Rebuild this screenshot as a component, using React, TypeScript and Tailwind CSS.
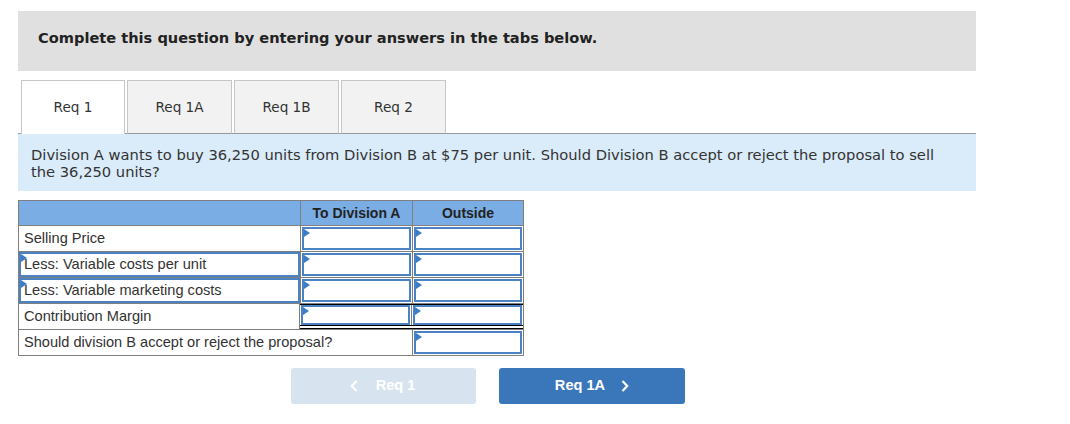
import React from 'react';

const tahoma = 'font-["DejaVu_Sans",Tahoma,sans-serif]';
const arial = 'font-["Liberation_Sans",Arial,sans-serif]';

const Marker = () => (
  <span className="absolute left-0 top-0 w-0 h-0 border-t-[4px] border-b-[4px] border-l-[6px] border-t-transparent border-b-transparent border-l-[#3d7cc9]" />
);

const InputBox: React.FC = () => (
  <div className="relative h-full w-full border-2 border-[#4a82c4] bg-white">
    <Marker />
  </div>
);

const tabs = ['Req 1', 'Req 1A', 'Req 1B', 'Req 2'];

const rows = [
  { label: 'Selling Price', select: false },
  { label: 'Less: Variable costs per unit', select: true },
  { label: 'Less: Variable marketing costs', select: true },
];

const App: React.FC = () => {
  return (
    <div className="w-[1070px] h-[424px] bg-white overflow-hidden">
      <div className="pl-[18px] pt-[11px]">
        <div className="w-[958px] h-[60px] bg-[#e0e0e0] pl-[20px] pt-[16px]">
          <p className={`${tahoma} text-[14.6px] font-bold text-[#222]`}>
            Complete this question by entering your answers in the tabs below.
          </p>
        </div>

        <div className="flex gap-[2px] pl-[3px] mt-[9px] relative z-10 -mb-px">
          {tabs.map((t, i) => (
            <div
              key={t}
              className={`${tahoma} h-[54px] flex items-center justify-center text-[13.6px] text-[#333] border border-[#c6c6c6] ${
                i === 0 ? 'w-[104px] bg-white border-b-0' : 'w-[105px] bg-[#f2f2f2] border-b-[#999]'
              }`}
            >
              {t}
            </div>
          ))}
        </div>

        <div className="w-[958px] h-[58px] bg-[#daebf9] border-t border-[#999] pl-[13px] pt-[12px]">
          <p className={`${tahoma} text-[14.7px] leading-[17px] text-[#333] whitespace-nowrap`}>
            Division A wants to buy 36,250 units from Division B at $75 per unit. Should Division B accept or reject the proposal to sell
            <br />
            the 36,250 units?
          </p>
        </div>

        <div className={`${arial} mt-[9px] w-[506px] border border-[#7f7f7f] text-[14.6px] text-[#333]`}>
          <div className="flex h-[25px] bg-[#7aade3] border-b border-[#7f7f7f]">
            <div className="w-[282px] border-r border-[#7f7f7f]" />
            <div className="w-[112px] border-r border-[#7f7f7f] flex items-center justify-center font-bold text-[14px] text-[#222]">
              To Division A
            </div>
            <div className="flex-1 flex items-center justify-center font-bold text-[14px] text-[#222]">Outside</div>
          </div>

          {rows.map((r) => (
            <div key={r.label} className="flex h-[26px] border-b border-[#7f7f7f]">
              <div className="w-[282px] border-r border-[#7f7f7f]">
                {r.select ? (
                  <div className="relative h-full border-2 border-[#4a82c4] flex items-center pl-[3px]">
                    <Marker />
                    {r.label}
                  </div>
                ) : (
                  <div className="h-full flex items-center pl-[5px]">{r.label}</div>
                )}
              </div>
              <div className="w-[112px] border-r border-[#7f7f7f] p-px">
                <InputBox />
              </div>
              <div className="flex-1 p-px">
                <InputBox />
              </div>
            </div>
          ))}

          <div className="flex h-[26px] border-b border-[#7f7f7f]">
            <div className="w-[282px] border-r border-[#7f7f7f] flex items-center pl-[5px]">Contribution Margin</div>
            <div className="w-[224px] flex flex-col">
              <div className="h-px bg-black" />
              <div className="flex flex-1">
                <div className="w-[112px] border-r border-[#7f7f7f] px-px">
                  <InputBox />
                </div>
                <div className="flex-1 px-px">
                  <InputBox />
                </div>
              </div>
              <div className="h-[4px] border-y border-black bg-white" />
            </div>
          </div>

          <div className="flex h-[25px]">
            <div className="w-[394px] border-r border-[#7f7f7f] flex items-center pl-[5px]">
              Should division B accept or reject the proposal?
            </div>
            <div className="flex-1 p-px">
              <InputBox />
            </div>
          </div>
        </div>

        <div className={`${arial} flex mt-[12px] pl-[273px] gap-[23px] text-[14.6px] font-bold text-white`}>
          <button className="w-[185px] h-[36px] rounded-[3px] bg-[#d8e3f0] flex items-center justify-center gap-[18px] pr-[2px]">
            <svg width="8" height="12" viewBox="0 0 8 12" fill="none" stroke="white" strokeWidth="2.2">
              <path d="M6.5 1 L1.8 6 L6.5 11" />
            </svg>
            <span>Req 1</span>
          </button>
          <button className="w-[186px] h-[36px] rounded-[3px] bg-[#3a76ba] flex items-center justify-center gap-[16px]">
            <span>Req 1A</span>
            <svg width="8" height="12" viewBox="0 0 8 12" fill="none" stroke="white" strokeWidth="2.2">
              <path d="M1.5 1 L6.2 6 L1.5 11" />
            </svg>
          </button>
        </div>
      </div>
    </div>
  );
};

export default App;
